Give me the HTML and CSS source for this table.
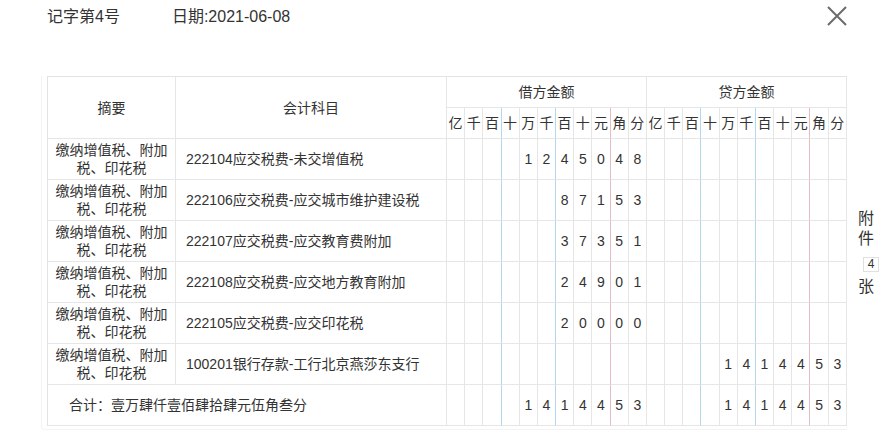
FILE: index.html
```html
<!DOCTYPE html>
<html lang="zh-CN">
<head>
<meta charset="utf-8">
<title>记账凭证</title>
<link rel="stylesheet" href="styles.css">
</head>
<body>
<div class="page">
  <div class="topbar">
    <div class="meta">
      <span class="no">记字第4号</span>
      <span class="date">日期:2021-06-08</span>
    </div>
    <button class="close" aria-label="关闭">
      <svg width="20" height="20" viewBox="0 0 20 20"><path d="M1 1 L19 19 M19 1 L1 19" stroke="#6b6b6b" stroke-width="2" fill="none"/></svg>
    </button>
  </div>
  <div class="main">
    <div class="wrap">
      <table class="voucher">
        <colgroup>
          <col class="w-zy"><col class="w-km">
          <col><col><col><col><col><col><col><col><col><col><col>
          <col><col><col><col><col><col><col><col><col><col><col>
        </colgroup>
        <thead>
          <tr class="h1">
            <th rowspan="2">摘要</th>
            <th rowspan="2">会计科目</th>
            <th colspan="11">借方金额</th>
            <th colspan="11">贷方金额</th>
          </tr>
          <tr class="h2">
            <th>亿</th><th>千</th><th class="b">百</th><th>十</th><th>万</th><th class="b">千</th><th>百</th><th>十</th><th class="r">元</th><th>角</th><th>分</th>
            <th>亿</th><th>千</th><th class="b">百</th><th>十</th><th>万</th><th class="b">千</th><th>百</th><th>十</th><th class="r">元</th><th>角</th><th>分</th>
          </tr>
        </thead>
        <tbody>
          <tr class="dr">
            <td class="zy">缴纳增值税、附加税、印花税</td>
            <td class="km">222104应交税费-未交增值税</td>
            <td></td><td></td><td class="b"></td><td></td><td>1</td><td class="b">2</td><td>4</td><td>5</td><td class="r">0</td><td>4</td><td>8</td>
            <td></td><td></td><td class="b"></td><td></td><td></td><td class="b"></td><td></td><td></td><td class="r"></td><td></td><td></td>
          </tr>
          <tr class="dr">
            <td class="zy">缴纳增值税、附加税、印花税</td>
            <td class="km">222106应交税费-应交城市维护建设税</td>
            <td></td><td></td><td class="b"></td><td></td><td></td><td class="b"></td><td>8</td><td>7</td><td class="r">1</td><td>5</td><td>3</td>
            <td></td><td></td><td class="b"></td><td></td><td></td><td class="b"></td><td></td><td></td><td class="r"></td><td></td><td></td>
          </tr>
          <tr class="dr">
            <td class="zy">缴纳增值税、附加税、印花税</td>
            <td class="km">222107应交税费-应交教育费附加</td>
            <td></td><td></td><td class="b"></td><td></td><td></td><td class="b"></td><td>3</td><td>7</td><td class="r">3</td><td>5</td><td>1</td>
            <td></td><td></td><td class="b"></td><td></td><td></td><td class="b"></td><td></td><td></td><td class="r"></td><td></td><td></td>
          </tr>
          <tr class="dr">
            <td class="zy">缴纳增值税、附加税、印花税</td>
            <td class="km">222108应交税费-应交地方教育附加</td>
            <td></td><td></td><td class="b"></td><td></td><td></td><td class="b"></td><td>2</td><td>4</td><td class="r">9</td><td>0</td><td>1</td>
            <td></td><td></td><td class="b"></td><td></td><td></td><td class="b"></td><td></td><td></td><td class="r"></td><td></td><td></td>
          </tr>
          <tr class="dr">
            <td class="zy">缴纳增值税、附加税、印花税</td>
            <td class="km">222105应交税费-应交印花税</td>
            <td></td><td></td><td class="b"></td><td></td><td></td><td class="b"></td><td>2</td><td>0</td><td class="r">0</td><td>0</td><td>0</td>
            <td></td><td></td><td class="b"></td><td></td><td></td><td class="b"></td><td></td><td></td><td class="r"></td><td></td><td></td>
          </tr>
          <tr class="dr">
            <td class="zy">缴纳增值税、附加税、印花税</td>
            <td class="km">100201银行存款-工行北京燕莎东支行</td>
            <td></td><td></td><td class="b"></td><td></td><td></td><td class="b"></td><td></td><td></td><td class="r"></td><td></td><td></td>
            <td></td><td></td><td class="b"></td><td></td><td>1</td><td class="b">4</td><td>1</td><td>4</td><td class="r">4</td><td>5</td><td>3</td>
          </tr>
          <tr class="dr total">
            <td class="sum" colspan="2">合计：壹万肆仟壹佰肆拾肆元伍角叁分</td>
            <td></td><td></td><td class="b"></td><td></td><td>1</td><td class="b">4</td><td>1</td><td>4</td><td class="r">4</td><td>5</td><td>3</td>
            <td></td><td></td><td class="b"></td><td></td><td>1</td><td class="b">4</td><td>1</td><td>4</td><td class="r">4</td><td>5</td><td>3</td>
          </tr>
        </tbody>
      </table>
    </div>
    <div class="attach">
      <span class="ch">附</span>
      <span class="ch">件</span>
      <span class="count">4</span>
      <span class="ch zhang">张</span>
    </div>
  </div>
</div>
</body>
</html>
```
FILE: styles.css
```css
* { box-sizing: border-box; }
html, body { margin: 0; padding: 0; background: #fff; }
body {
  font-family: "Liberation Sans", "Noto Sans CJK SC", sans-serif;
  color: #333;
  width: 886px;
  height: 435px;
  overflow: hidden;
}
.topbar {
  display: flex;
  justify-content: space-between;
  align-items: flex-start;
  height: 76px;
  padding-left: 47px;
  padding-right: 39px;
}
.meta {
  display: flex;
  gap: 52px;
  font-size: 16px;
  line-height: 20px;
  padding-top: 7px;
  color: #333;
}
.close {
  margin-top: 6px;
  padding: 0;
  border: 0;
  background: none;
  width: 20px;
  height: 20px;
  display: block;
}
.close svg { display: block; }
.main {
  display: flex;
  align-items: center;
}
.wrap {
  margin-left: 41px;
  padding-left: 5px;
  padding-bottom: 3px;
  border-left: 1px solid #f3f3f3;
  border-bottom: 1px solid #f3f3f3;
  border-bottom-left-radius: 4px;
}
.voucher {
  width: 800px;
  table-layout: fixed;
  border-collapse: separate;
  border-spacing: 0;
  border-top: 1px solid #e3e3e3;
  border-left: 1px solid #e3e3e3;
  font-size: 14px;
}
.w-zy { width: 128px; }
.w-km { width: 271px; }
.voucher th, .voucher td {
  border-right: 1px solid #e6e6e6;
  border-bottom: 1px solid #e6e6e6;
  padding: 0;
  text-align: center;
  font-weight: normal;
  color: #333;
  line-height: 18px;
}
.voucher .b { border-right-color: #b3d8ee; }
.voucher .r { border-right-color: #e6bcc4; }
.h1 { height: 31px; }
.h2 { height: 31px; }
.dr { height: 41px; }
.voucher td.zy {
  padding: 0 6px;
  line-height: 18px;
}
.voucher td.km {
  text-align: left;
  padding-left: 10px;
  white-space: nowrap;
}
.voucher td.sum {
  text-align: left;
  padding-left: 21px;
}
.attach {
  display: flex;
  flex-direction: column;
  align-items: flex-start;
  padding-left: 11px;
  font-size: 16px;
  color: #333;
}
.attach .ch {
  display: block;
  line-height: 20px;
}
.attach .count {
  display: block;
  width: 16px;
  height: 15px;
  margin: 8px 0 5px 5px;
  border: 1px solid #e0e0e0;
  font-size: 12px;
  line-height: 13px;
  text-align: center;
}
```
